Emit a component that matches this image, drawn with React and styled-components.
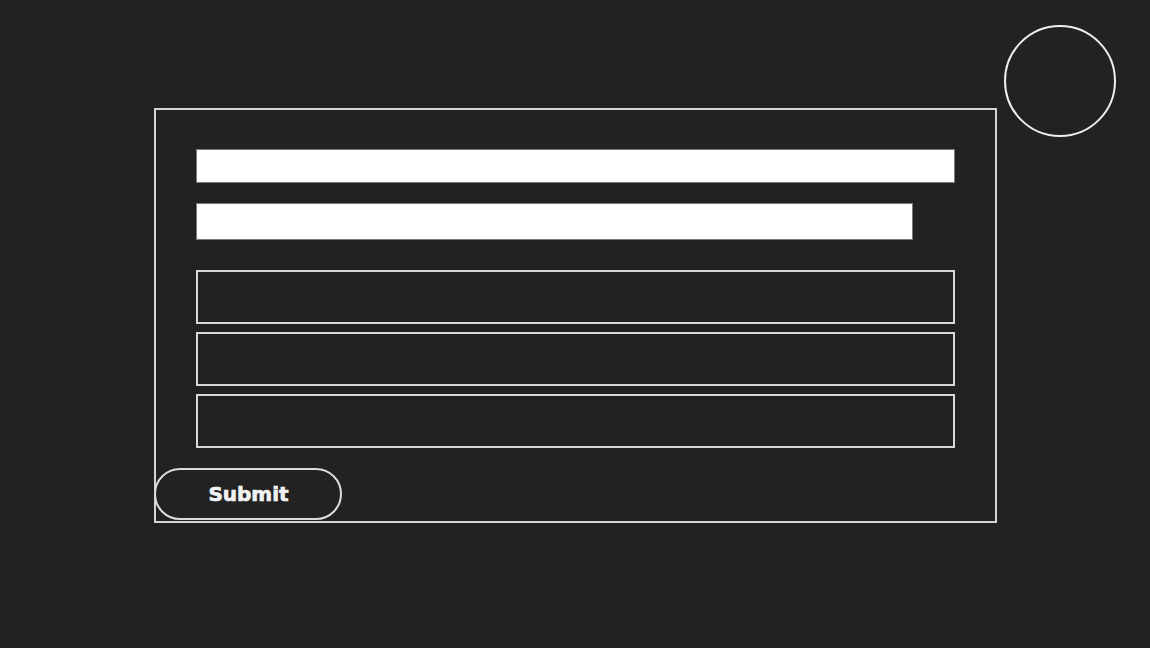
import React from 'react'
import styled, { createGlobalStyle } from 'styled-components'

const GlobalStyle = createGlobalStyle`
    * {
        box-sizing: border-box;
    }
    body {
        margin: 0;
        background-color: #222222;
        font-family: Lato, "Noto Sans", sans-serif;
    }
`

const Page = styled.div`
    position: relative;
    min-height: 648px;
    padding: 108px 0 0 154px;
`

const Avatar = styled.div`
    position: absolute;
    top: 25px;
    left: 1004px;
    width: 112px;
    height: 112px;
    border: 2px solid #eeeeee;
    border-radius: 50%;
`

const Form = styled.form`
    display: flex;
    flex-direction: column;
    align-items: flex-start;
    width: 843px;
    height: 415px;
    border: 2px solid #d4d4d4;
    padding: 39px 0 0 40px;
`

const TextBar = styled.input`
    display: block;
    width: ${props => props.$width}px;
    height: ${props => props.$height}px;
    margin: 0 0 ${props => props.$gap}px 0;
    padding: 0;
    background: #ffffff;
    border: 1px solid #7a7a7a;
    outline: none;
`

const Fields = styled.div`
    display: flex;
    flex-direction: column;
    gap: 8px;
    margin-top: 10px;
`

const FieldBox = styled.textarea`
    display: block;
    width: 759px;
    height: 54px;
    margin: 0;
    padding: 0;
    background: transparent;
    border: 2px solid #d8d8d8;
    resize: none;
    outline: none;
`

const SubmitButton = styled.button`
    margin-top: auto;
    margin-bottom: 1px;
    margin-left: -42px;
    width: 188px;
    height: 52px;
    padding: 0 0 0 1px;
    border: 2px solid #dcdcdc;
    border-radius: 26px;
    background: transparent;
    color: #f2f2f2;
    font-family: "DejaVu Sans", Lato, sans-serif;
    font-weight: 700;
    font-size: 20px;
    -webkit-text-stroke: 0.7px #f2f2f2;
    cursor: pointer;
`

function App() {
    const handleSubmit = (e) => {
        e.preventDefault()
    }

    return (
        <Page>
            <GlobalStyle />
            <Avatar />
            <Form onSubmit={handleSubmit}>
                <TextBar type="text" $width={759} $height={34} $gap={20} />
                <TextBar type="text" $width={717} $height={37} $gap={20} />
                <Fields>
                    <FieldBox />
                    <FieldBox />
                    <FieldBox />
                </Fields>
                <SubmitButton type="submit">Submit</SubmitButton>
            </Form>
        </Page>
    )
}

export default App
